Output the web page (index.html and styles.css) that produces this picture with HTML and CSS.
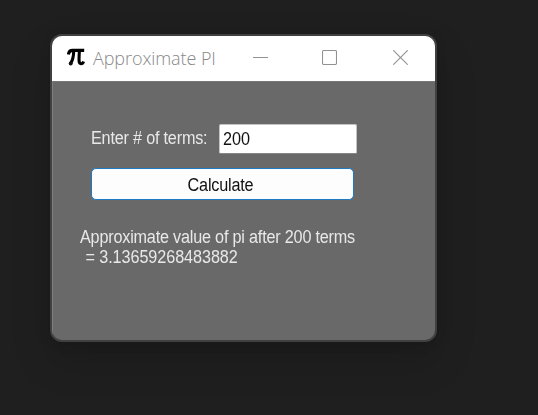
FILE: index.html
```html
<!DOCTYPE html>
<html lang="en">
<head>
<meta charset="utf-8">
<title>Approximate PI</title>
<link rel="stylesheet" href="styles.css">
</head>
<body>
<main class="window">
  <header class="titlebar">
    <svg class="app-icon" viewBox="0 0 18 18">
      <path class="bar" d="M1.3 6.4C1.8 3.7 2.9 2.4 5.4 2.4H17.2"/>
      <path class="leg" d="M6.7 3C6.6 8 6 12 3.6 15.3"/>
      <path class="leg" d="M12.4 3C12.1 7 11.9 10 12.1 12.9C12.3 16.4 15.4 16.8 16.6 13.4"/>
      <circle cx="3.7" cy="15.4" r="2"/>
    </svg>
    <h1 class="title">Approximate PI</h1>
    <div class="controls">
      <svg class="control" viewBox="0 0 15 15"><path d="M0 7.5H15"/></svg>
      <svg class="control" viewBox="0 0 15 15"><rect x=".5" y=".5" width="14" height="14" rx="1.2"/></svg>
      <svg class="control" viewBox="0 0 15 15"><path d="M.3 .3L14.7 14.7M14.7 .3L.3 14.7"/></svg>
    </div>
  </header>
  <form class="content">
    <div class="field">
      <label class="label" for="terms"><span class="text">Enter # of terms:</span></label>
      <div class="input" id="terms" role="textbox" contenteditable="true"><span class="text">200</span></div>
    </div>
    <button class="button" type="button"><span class="text text-center">Calculate</span></button>
    <div class="result">
      <div class="text">Approximate value of pi after 200 terms</div>
      <div class="text result-value">= 3.13659268483882</div>
    </div>
  </form>
</main>
</body>
</html>
```
FILE: styles.css
```css
* {
  box-sizing: border-box;
}

body {
  margin: 0;
  height: 415px;
  padding: 34px 0 0 50px;
  overflow: hidden;
  background: #1f1f1f;
  font: 18px/20px "Liberation Sans", Arial, sans-serif;
}

.window {
  width: 387px;
  height: 308px;
  border: 2px solid #404040;
  border-radius: 12px;
  overflow: hidden;
  background: #696969;
  box-shadow: 0 18px 40px rgba(0, 0, 0, 0.16), 0 2px 12px rgba(0, 0, 0, 0.1);
}

.titlebar {
  display: flex;
  height: 45px;
  background: #fff;
}

.app-icon {
  width: 18px;
  height: 18px;
  margin: 12px 0 0 15px;
  fill: #111;
  filter: blur(0.4px);
}

.bar,
.leg {
  fill: none;
  stroke: #000;
  stroke-width: 3.1;
}

.title {
  width: 160px;
  margin: 10px 0 0 8px;
  color: #888;
  font: 300 18px/24px "Open Sans", sans-serif;
  letter-spacing: -0.08px;
  white-space: nowrap;
}

.controls {
  display: flex;
  gap: 55px;
  padding-top: 14px;
}

.control {
  width: 15px;
  height: 15px;
  fill: none;
  stroke: #929292;
  stroke-width: 1.1;
}

.control:nth-child(2) {
  margin-left: -1px;
  margin-right: 1px;
}

.content {
  height: 259px;
  margin: 0;
  padding: 42px 0 0 28px;
  border-top: 1px solid #777;
  border-left: 1px solid #808080;
}

/* Condensed form lettering */
.text {
  display: block;
  transform: scaleX(0.9);
  transform-origin: left;
  letter-spacing: -0.22px;
  white-space: nowrap;
}

.text-center {
  transform-origin: center;
}

.field {
  display: flex;
  height: 30px;
  padding-left: 10px;
}

.label {
  width: 128px;
  padding-top: 4px;
  color: #e8e8e8;
}

.input {
  width: 138px;
  height: 30px;
  padding: 4px 0 0 3px;
  border: 1px solid #c4c4c4;
  border-bottom-color: #858585;
  border-radius: 2px;
  background: #fff;
  color: #111;
}

.input .text {
  letter-spacing: 0;
}

.button {
  display: block;
  width: 263px;
  height: 32px;
  margin: 14px 0 0 10px;
  padding: 1px 4px 0 0;
  border: 1px solid #1d7ac5;
  border-radius: 5px;
  background: #fdfdfd;
  color: #111;
  font: inherit;
}

.result {
  margin: 28px 0 0 -0.8px;
  color: #e8e8e8;
  line-height: 19.5px;
}

.result-value {
  padding-left: 6px;
  letter-spacing: -0.08px;
}
```
